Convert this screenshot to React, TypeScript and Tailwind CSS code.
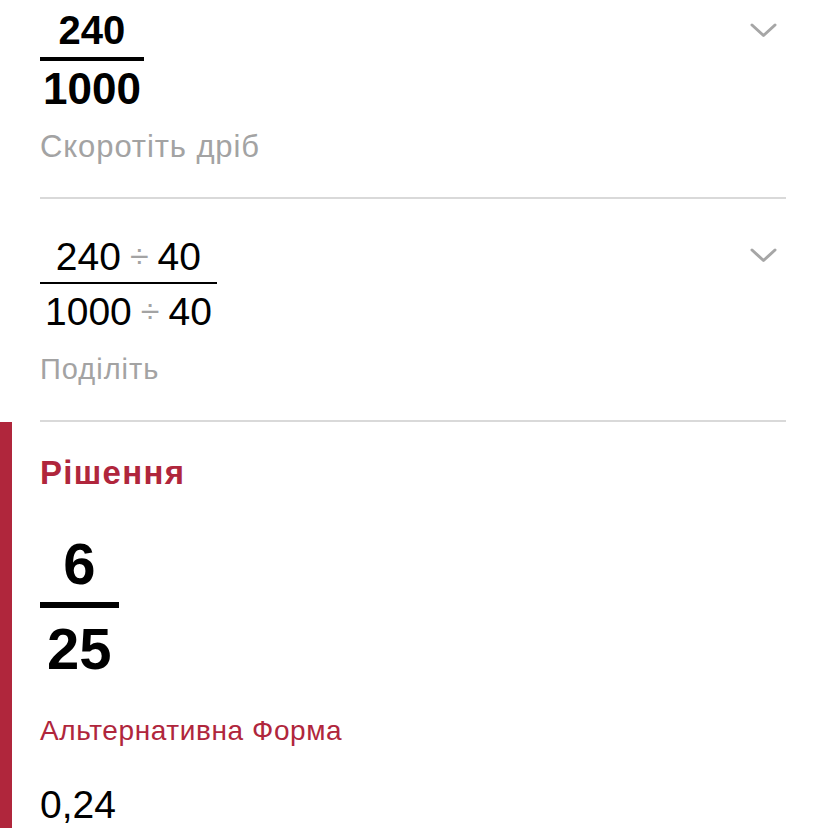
import React from "react";

const font = { fontFamily: '"Liberation Sans", Arial, sans-serif' };

function Chevron() {
  return (
    <svg width="27" height="15" viewBox="0 0 27 15" className="shrink-0">
      <polyline points="2,2 13.5,12.5 25,2" fill="none" stroke="#a6a6a6" strokeWidth="3" strokeLinecap="round" strokeLinejoin="round" />
    </svg>
  );
}

function Div() {
  return <span className="text-[#a3a3a3] text-[34px] leading-[0] mx-[9px] relative top-[-2px]">÷</span>;
}

export default function App() {
  return (
    <div className="w-[826px] h-[828px] bg-white overflow-hidden" style={font}>
      {/* Item 1 */}
      <div className="px-[40px]">
        <div className="flex items-start justify-between pt-[10px]">
          <div className="inline-flex flex-col items-stretch text-black">
            <div className="text-[40px] leading-[40px] font-bold text-center px-[4px]">240</div>
            <div className="h-[4px] bg-black mt-[7px]" />
            <div className="text-[44px] leading-[44px] font-bold text-center px-[3px] mt-[6px]">1000</div>
          </div>
          <div className="mt-[13px] mr-[9px]"><Chevron /></div>
        </div>
        <div className="text-[31px] leading-[31px] tracking-[0.9px] text-[#a3a3a3] mt-[20px]">Скоротіть дріб</div>
        <div className="h-[2px] bg-[#d9d9d9] mt-[35px]" />
      </div>

      {/* Item 2 */}
      <div className="px-[40px]">
        <div className="flex items-start justify-between pt-[38px]">
          <div className="inline-flex flex-col items-stretch text-black">
            <div className="text-[39px] leading-[39px] text-center whitespace-nowrap">240<Div />40</div>
            <div className="h-[2px] bg-black mt-[6px]" />
            <div className="text-[39px] leading-[39px] text-center whitespace-nowrap px-[5px] mt-[8px]">1000<Div />40</div>
          </div>
          <div className="mt-[11px] mr-[9px]"><Chevron /></div>
        </div>
        <div className="text-[29px] leading-[29px] tracking-[1px] text-[#a3a3a3] mt-[24px]">Поділіть</div>
        <div className="h-[2px] bg-[#d9d9d9] mt-[36px]" />
      </div>

      {/* Solution */}
      <div className="flex">
        <div className="w-[12px] bg-[#b0263c] shrink-0" />
        <div className="pl-[28px] pb-[20px]">
          <div className="text-[33px] leading-[33px] tracking-[1.3px] font-bold text-[#b0263c] pt-[34px]">Рішення</div>
          <div className="inline-flex flex-col items-stretch text-black mt-[46px]">
            <div className="text-[58px] leading-[58px] font-bold text-center">6</div>
            <div className="h-[6px] bg-black mt-[9px]" />
            <div className="text-[58px] leading-[58px] font-bold text-center px-[7px] mt-[12px]">25</div>
          </div>
          <div className="text-[28px] leading-[28px] tracking-[0.6px] text-[#b0263c] mt-[39px]">Альтернативна Форма</div>
          <div className="text-[39px] leading-[39px] text-black mt-[40px]">0,24</div>
        </div>
      </div>
    </div>
  );
}
